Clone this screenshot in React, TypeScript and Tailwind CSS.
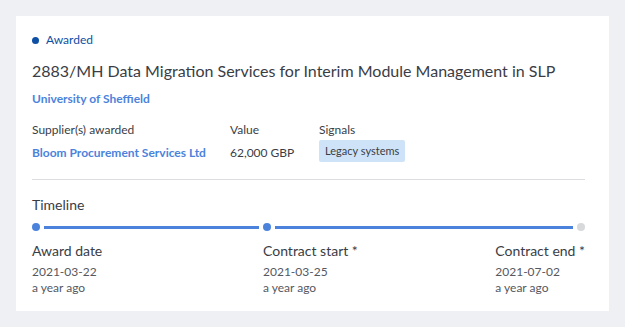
import React from "react";

export default function App() {
  return (
    <div className="min-h-[327px] w-[625px] bg-[#eef0f4] p-4" style={{ fontFamily: "Lato, 'Noto Sans', sans-serif" }}>
      <div className="bg-white pl-4 pr-6 pt-4 h-[295px]">
        <div className="flex items-center gap-[7px] text-[12px] leading-[16px] text-[#0d4fa5]">
          <span className="block h-[7px] w-[7px] rounded-full bg-[#0d4fa5]" />
          Awarded
        </div>
        <div className="mt-[11px] text-[16px] leading-[24px] text-[#3a3d45]">
          2883/MH Data Migration Services for Interim Module Management in SLP
        </div>
        <div className="mt-[8px] text-[12px] leading-[16px] font-bold text-[#4b83dc]">University of Sheffield</div>
        <div className="mt-[15px] flex text-[12px] leading-[16px] text-[#3a3d45]">
          <div className="w-[198px]">
            <div>Supplier(s) awarded</div>
            <div className="mt-[7px] font-bold text-[#4b83dc]">Bloom Procurement Services Ltd</div>
          </div>
          <div className="w-[89px]">
            <div>Value</div>
            <div className="mt-[7px]">62,000 GBP</div>
          </div>
          <div>
            <div>Signals</div>
            <div className="mt-[2px] inline-block rounded-[2px] bg-[#cfe3f8] px-[6px] py-[3px] text-[11px] leading-[16px]">Legacy systems</div>
          </div>
        </div>
        <div className="mt-[17px] border-t border-[#dcdde0]" />
        <div className="mt-[15px] text-[14px] leading-[20px] text-[#3a3d45]">Timeline</div>
        <div className="mt-[8px] flex items-center gap-1">
          <span className="block h-2 w-2 rounded-full bg-[#4b83dc]" />
          <span className="block h-[3px] w-[215px] bg-[#4b83dc]" />
          <span className="block h-2 w-2 rounded-full bg-[#4b83dc]" />
          <span className="block h-[3px] flex-1 bg-[#4b83dc]" />
          <span className="block h-2 w-2 rounded-full bg-[#d8d9db]" />
        </div>
        <div className="mt-[10px] flex text-[#3a3d45]">
          <div className="w-[231px]">
            <div className="text-[14px] leading-[20px]">Award date</div>
            <div className="mt-[3px] text-[12px] leading-[16px] text-[#55585f]">2021-03-22</div>
            <div className="text-[12px] leading-[16px] text-[#55585f]">a year ago</div>
          </div>
          <div className="flex-1">
            <div className="text-[14px] leading-[20px]">Contract start *</div>
            <div className="mt-[3px] text-[12px] leading-[16px] text-[#55585f]">2021-03-25</div>
            <div className="text-[12px] leading-[16px] text-[#55585f]">a year ago</div>
          </div>
          <div>
            <div className="text-[14px] leading-[20px]">Contract end *</div>
            <div className="mt-[3px] text-[12px] leading-[16px] text-[#55585f]">2021-07-02</div>
            <div className="text-[12px] leading-[16px] text-[#55585f]">a year ago</div>
          </div>
        </div>
      </div>
    </div>
  );
}
